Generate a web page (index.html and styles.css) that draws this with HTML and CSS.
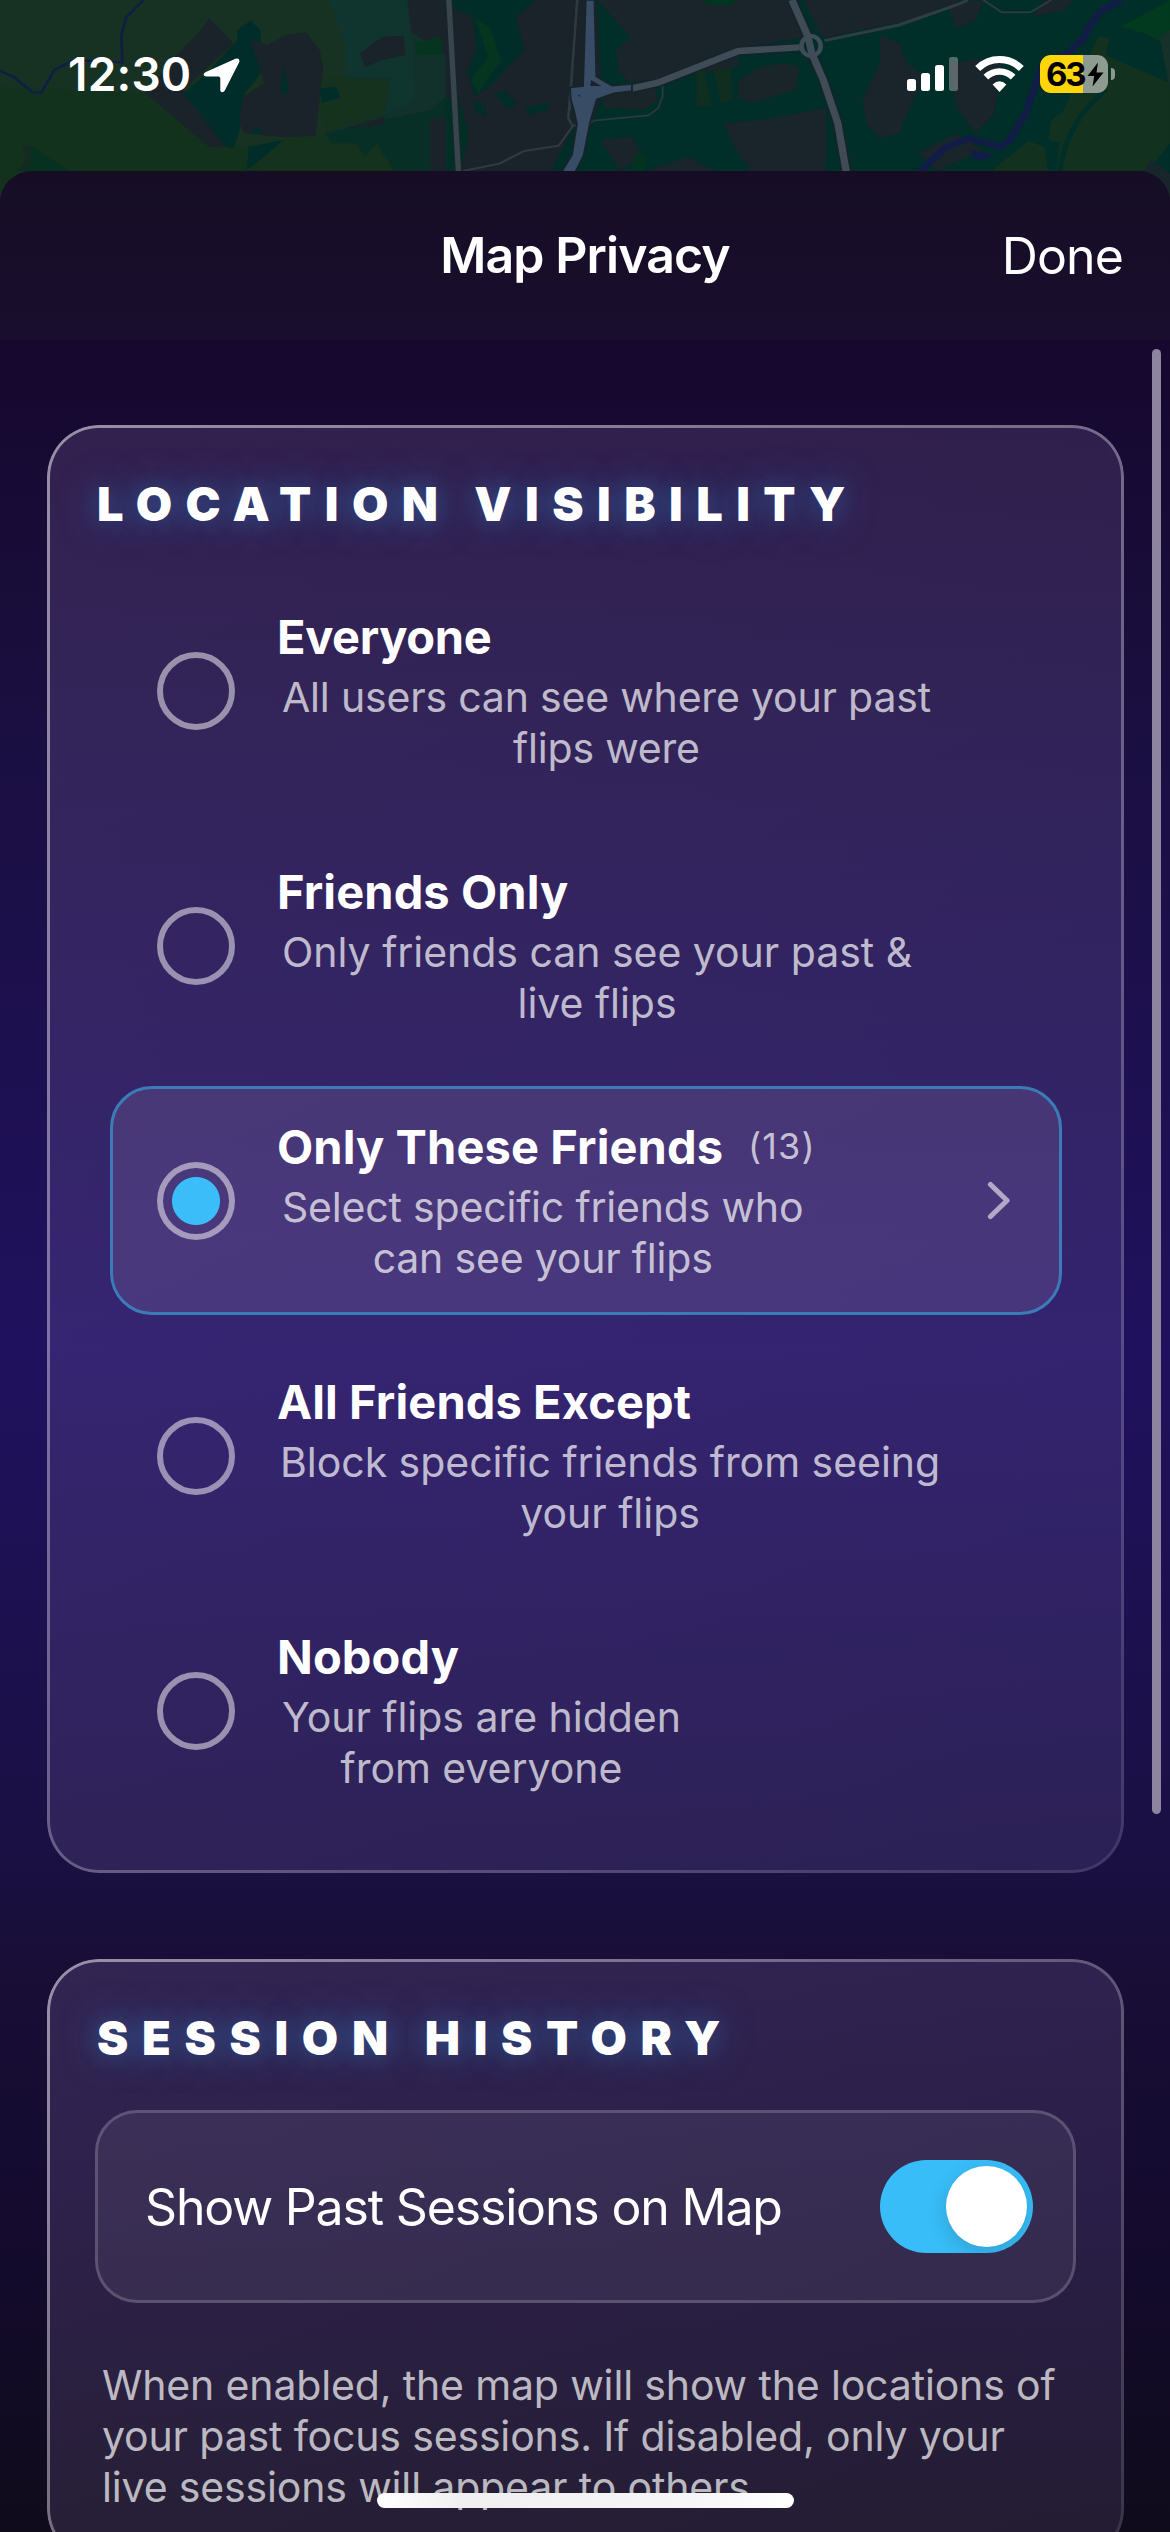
FILE: index.html
```
<!DOCTYPE html>
<html lang="en">
<head>
<meta charset="utf-8">
<title>Map Privacy</title>
<link rel="stylesheet" href="styles.css">
</head>
<body>
<div class="screen">
  <svg class="map" viewBox="0 0 1170 220" width="1170" height="220" aria-hidden="true">
    <rect width="1170" height="220" fill="#12312a"/>
    <g transform="scale(.38265 .33333)">
      <path d="M0 0H860L905 140V240H1020L1000 340L850 400L860 440L1030 513V660H0Z" fill="#173222"/>
      <path d="M0 260L380 280L560 440L640 440L850 400L1000 440L1030 513V660H0Z" fill="#12321e"/>
      <path d="M835 310V230L1020 240L1005 345L960 360L850 395ZM650 440L830 400L980 430L1030 513H690Z" fill="#15321f"/>
      <path d="M860 0H1060L1080 140L1085 300L1005 345L1020 235H903V140Z" fill="#10352f"/>
      <path d="M547 55L610 130L480 270L600 400V440H545L380 280L450 180L520 95Z" fill="#1a2329"/>
      <path d="M655 62L680 90L690 210L640 280L625 400L610 445L590 440L480 280L540 220L620 120V90Z" fill="#002d29"/>
      <path d="M655 120L700 135L745 105L800 97L835 150L845 200L835 300L825 408L740 412L640 400L625 370L635 290L690 250Z" fill="#1a2329"/>
      <path d="M743 195L756 280H732ZM835 265L880 260L888 295L840 308ZM672 378L692 402H650ZM650 440L740 420L690 470L645 510Z" fill="#002d29"/>
      <path d="M80 437L180 513H40L80 490Z" fill="#06301f"/>
      <path d="M60 437H80V490L50 513L65 480Z" fill="#152a22"/>
      <path d="M850 400L1000 360L1125 330L1165 290V513H1030L985 430L955 470L930 430H865Z" fill="#072f25"/>
      <path d="M940 160L1000 110L1055 107L1060 165L1000 180L955 200ZM900 385L1005 350L1000 375Z" fill="#1a2329"/>
      <path d="M1065 0H1570V513H1125V360L1165 350V165L1075 95Z" fill="#1a2329"/>
      <path d="M1180 0H1400L1350 50L1370 150L1290 250L1240 290L1220 210L1245 150L1235 50L1190 30Z" fill="#002d28"/>
      <path d="M1245 60L1280 80L1310 180L1250 280L1230 240L1275 170Z" fill="#06351f"/>
      <path d="M1085 130L1155 110V165H1090Z" fill="#06351f"/>
      <path d="M1240 305L1265 310L1270 350L1240 335ZM1290 280L1320 272L1350 310L1330 330ZM1370 325L1430 305L1435 330L1385 345Z" fill="#002d28"/>
      <path d="M1200 300L1225 400L1205 513H1165V290Z" fill="#002f26"/>
      <path d="M1500 380L1440 513H1570V380Z" fill="#002d28"/>
      <path d="M375 0L330 52L317 105L320 187L195 180L142 210L108 278L85 277L35 230L0 212" fill="none" stroke="#101d45" stroke-width="7"/>
      <path d="M1173 0L1198 516" stroke="#17262a" stroke-width="20"/>
      <path d="M1173 0L1198 516" stroke="#38454c" stroke-width="14"/>
      <path d="M1509 0L1485 355L1497 378L1460 437L1370 453L1305 491L1210 513M1497 378L1570 360" fill="none" stroke="#303b40" stroke-width="6"/>
    </g>
    <g transform="translate(570 0) scale(.38265 .33333)">
      <path d="M80 0H1568V660H0V513L30 460L80 300Z" fill="#002e28"/>
      <path d="M70 0H580L620 110L440 145L230 235L150 250L90 80ZM125 100L440 100V200L230 240L125 220Z" fill="#1a242b"/>
      <path d="M70 0L160 110L120 150V225L80 210Z" fill="#002e28"/>
      <path d="M340 0H430V15H370Z" fill="#00351f"/>
      <path d="M620 0H1020L890 60L660 115L610 0ZM985 10L1080 0L1060 60L1010 85ZM1210 50L1290 30L1320 0H1240Z" fill="#1a242b"/>
      <path d="M810 105L860 130L880 190L930 230L900 290L860 400L810 415L775 370L765 300L810 190ZM990 190L1130 170L1110 340L1060 400L1010 320ZM500 360L670 325L668 513H470L430 440L400 370ZM80 420L160 410L190 470L130 513ZM200 513L310 470L380 513ZM910 460L1010 400L1080 450L960 513Z" fill="#1a242b"/>
      <path d="M500 200L550 190L600 200L590 270L470 310L440 290L440 240ZM80 270L220 260L230 300L190 330L90 320Z" fill="#1a252a"/>
      <path d="M330 215L350 210L370 315L330 320ZM375 210L420 205L425 300L395 310Z" fill="#102e20"/>
      <path d="M170 460L200 470L195 513H160Z" fill="#053220"/>
      <path d="M1380 110L1410 112L1400 165L1568 250V430L1510 513H1100L1180 440L1290 330Z" fill="#12311f"/>
      <path d="M1440 80L1568 0V140L1500 100Z" fill="#023a20"/>
      <path d="M1540 110L1568 90V270Z" fill="#16302a"/>
      <path d="M1225 300L1260 340L1250 420L1280 430L1270 513H1250L1240 440L1190 420Z" fill="#002e28"/>
      <path d="M1400 270Q1300 360 1280 513" fill="none" stroke="#002e28" stroke-width="14"/>
      <path d="M1500 513L1520 480L1568 520V660Z" fill="#18252a"/>
      <path d="M1440 0L1385 35L1360 75L1340 120L1300 160L1240 185L1215 260L1190 340L1150 420L1125 440L1040 415L985 440L915 513" fill="none" stroke="#111d46" stroke-width="19"/>
      <path d="M1050 450L1110 465L1080 480L1050 475Z" fill="#111d46"/>
      <path d="M1080 0L1128 37H1203L1258 0" fill="none" stroke="#2c393e" stroke-width="6"/>
      <path d="M60 362L205 346L230 325L242 290V260L225 232M18 0L0 330" fill="none" stroke="#2c393e" stroke-width="5"/>
      <path d="M665 122L860 75L1010 15L1040 0" fill="none" stroke="#303c42" stroke-width="9"/>
      <path d="M580 0L622 110M630 160L662 240L700 370L722 516M160 266L230 248L440 153L600 142" fill="none" stroke="#16242a" stroke-width="28" stroke-linejoin="round"/>
      <path d="M580 0L622 110L632 160L662 240L700 370L722 516M160 266L230 248L440 153L600 142" fill="none" stroke="#3f4c58" stroke-width="19" stroke-linejoin="round"/>
      <ellipse cx="630" cy="138" rx="25" ry="30" fill="none" stroke="#3f4c58" stroke-width="12"/>
      <path d="M41 0H64L69 230L110 257L162 252V273L115 280L70 298L52 370L36 465L14 516H-22L5 465L18 372L10 330L2 300L0 262L34 258Z" fill="#384c66" stroke="#16242c" stroke-width="5"/>
      <path d="M53 258L55 240L82 258Z" fill="#16242c"/>
      <circle cx="24" cy="287" r="2.500" fill="#16242c"/>
    </g>
  </svg>

  <header class="status">
    <div class="clock">12:30
      <svg width="37" height="35" viewBox="0 0 37 35"><path d="M2.300 14.200L32.500.700Q37-.700 36.300 4L21.800 32.500Q19.800 35.800 17.300 33V20.300Q17 18.800 15.500 18.600H3Q-1.400 17 2.300 14.200Z" fill="#fff"/></svg>
    </div>
    <div class="indicators">
      <svg class="signal" width="51" height="34" viewBox="0 0 51 34" fill="#fff">
        <rect y="22" width="9" height="12" rx="2.500"/><rect x="14" y="16" width="9" height="18" rx="2.500"/><rect x="28" y="8" width="9" height="26" rx="2.500"/><rect x="42" width="9" height="34" rx="2.500" opacity=".3"/>
      </svg>
      <svg class="wifi" width="49" height="36" viewBox="0 0 49 36">
        <path d="M2.700 12.500A31 31 0 0 1 46.300 12.500" fill="none" stroke="#fff" stroke-width="7"/>
        <path d="M10.900 21.100A19.200 19.200 0 0 1 38.100 21.100" fill="none" stroke="#fff" stroke-width="6.600"/>
        <path d="M24.500 36L17.600 28.500Q24.500 22 31.400 28.500Z" fill="#fff"/>
      </svg>
      <div class="battery">
        <span class="level">63</span>
        <svg width="17" height="25" viewBox="0 0 17 25"><path d="M11 .5L.5 14H7.200L5.500 24.500L16.500 10.500H9.500Z" fill="#000"/></svg>
      </div>
      <span class="nub"></span>
    </div>
  </header>

  <main class="sheet">
    <div class="navbar">
      <h1 class="nav-title">Map Privacy</h1>
      <span class="nav-done">Done</span>
    </div>
    <div class="content">
      <section class="card">
        <h2 class="card-title">LOCATION VISIBILITY</h2>
        <div class="options">
          <div class="option">
            <span class="radio"></span>
            <div class="option-text">
              <div class="option-name tight">Everyone</div>
              <p class="option-desc inset tight">All users can see where your past<br>flips were</p>
            </div>
          </div>
          <div class="option">
            <span class="radio"></span>
            <div class="option-text">
              <div class="option-name">Friends Only</div>
              <p class="option-desc inset">Only friends can see your past &amp;<br>live flips</p>
            </div>
          </div>
          <div class="option selected">
            <span class="radio"></span>
            <div class="option-text">
              <div class="option-name">Only These Friends <span class="count">(13)</span></div>
              <p class="option-desc inset tight">Select specific friends who<br>can see your flips</p>
            </div>
            <svg class="chevron" width="24" height="39" viewBox="0 0 24 39"><path d="M3.500 3.500L20 19.500L3.500 35.500" fill="none" stroke="#b3a8c7" stroke-width="5.200" stroke-linecap="round" stroke-linejoin="round"/></svg>
          </div>
          <div class="option">
            <span class="radio"></span>
            <div class="option-text">
              <div class="option-name">All Friends Except</div>
              <p class="option-desc">Block specific friends from seeing<br>your flips</p>
            </div>
          </div>
          <div class="option">
            <span class="radio"></span>
            <div class="option-text">
              <div class="option-name">Nobody</div>
              <p class="option-desc inset">Your flips are hidden<br>from everyone</p>
            </div>
          </div>
        </div>
      </section>

      <section class="card card-history">
        <h2 class="card-title wide">SESSION HISTORY</h2>
        <div class="setting">
          <span class="setting-label">Show Past Sessions on Map</span>
          <span class="switch"><span class="knob"></span></span>
        </div>
        <p class="note">When enabled, the map will show the locations of<br>your past focus sessions. If disabled, only your<br>live sessions will appear to others.</p>
      </section>
    </div>
  </main>
  <div class="scrollbar"></div>
  <div class="home-bar"></div>
</div>
</body>
</html>
```
FILE: styles.css
```
* { box-sizing: border-box; }
body { margin: 0; background: #000; }
h1, h2, p { margin: 0; }

.screen {
  position: relative;
  width: 1170px;
  height: 2532px;
  overflow: hidden;
  color: #fff;
  font-family: Inter, "Liberation Sans", sans-serif;
  white-space: nowrap;
}
.map { position: absolute; left: 0; top: 0; }

.status {
  position: relative;
  height: 171px;
  padding: 45px 55px 0 68px;
  display: flex;
  justify-content: space-between;
}
.clock {
  height: 58px;
  display: flex;
  align-items: center;
  gap: 12px;
  font-size: 46px;
  line-height: 58px;
  font-weight: 600;
  letter-spacing: .2px;
}
.clock svg { margin-top: 3px; }
.indicators { height: 58px; display: flex; align-items: center; }
.wifi { margin-left: 16.500px; }
.battery {
  width: 68px;
  height: 38px;
  margin-left: 16.500px;
  padding-left: 6px;
  border-radius: 11px;
  background: linear-gradient(90deg, #ffd60a 43px, #8d9b91 43px);
  display: flex;
  align-items: center;
}
.level {
  width: 41px;
  color: #000;
  font-size: 33px;
  line-height: 38px;
  font-weight: 700;
  letter-spacing: -2.200px;
}
.nub {
  width: 4.500px;
  height: 12px;
  margin-left: 2.500px;
  border-radius: 0 5px 5px 0;
  background: #8b9a90;
}

.sheet {
  position: relative;
  height: 2361px;
  border-radius: 32px 32px 0 0;
  overflow: hidden;
  background: linear-gradient(180deg, #16082a 0, #16082e 190px, #1a0f40 550px, #20115e 1180px, #1a1042 1690px, #180e36 1800px, #140b2f 2040px, #100b1b 2361px);
}
.navbar {
  height: 169px;
  padding: 0 47px;
  background: linear-gradient(180deg, #160d25, #190e2d);
  display: grid;
  grid-template-columns: 1fr auto 1fr;
  align-items: center;
}
.nav-title {
  grid-column: 2;
  margin-top: -2px;
  font-size: 50px;
  line-height: 60px;
  font-weight: 600;
  letter-spacing: -.91px;
}
.nav-done {
  justify-self: end;
  font-size: 50px;
  line-height: 60px;
  letter-spacing: -.87px;
}

.content {
  padding: 85px 46px 0 47px;
  display: flex;
  flex-direction: column;
  gap: 86px;
}
.card {
  position: relative;
  height: 1448px;
  flex: none;
  padding: 50px 48px 0;
  border-radius: 52px;
  background: linear-gradient(155deg, rgba(215, 175, 255, .14), rgba(200, 180, 255, .1));
}
.card::before {
  content: "";
  position: absolute;
  inset: 0;
  padding: 3px;
  border-radius: inherit;
  background: linear-gradient(135deg, rgba(255, 255, 255, .5), rgba(255, 255, 255, .1));
  -webkit-mask: linear-gradient(#000 0 0) content-box exclude, linear-gradient(#000 0 0);
  mask: linear-gradient(#000 0 0) content-box exclude, linear-gradient(#000 0 0);
}
.card-title {
  padding-left: 2px;
  font-size: 47px;
  line-height: 58px;
  font-weight: 900;
  letter-spacing: 13.460px;
  text-shadow: 0 0 36px rgba(56, 150, 230, .5), 0 0 22px rgba(50, 130, 210, .25);
}
.card-title.wide { letter-spacing: 13.680px; }

.options {
  margin: 43px 14px 0 15px;
  display: flex;
  flex-direction: column;
  gap: 26px;
}
.option {
  height: 229px;
  padding: 0 51px 0 47px;
  display: flex;
  align-items: center;
}
.selected {
  border: 3px solid #3b7cb8;
  padding: 0 48px 0 44px;
  border-radius: 42px;
  background: rgba(255, 230, 255, .1);
}
.radio {
  width: 78px;
  height: 78px;
  border: 6px solid rgba(255, 255, 255, .5);
  border-radius: 50%;
}
.selected .radio {
  background: radial-gradient(circle, #3abdf9 23.500px, rgba(58, 189, 249, 0) 24.500px);
}
.option-text {
  margin-left: 42px;
  display: flex;
  flex-direction: column;
  align-items: flex-start;
  gap: 7px;
}
.option-name {
  display: flex;
  align-items: center;
  font-size: 47px;
  line-height: 57px;
  font-weight: 700;
  letter-spacing: .1px;
}
.option-name.tight { letter-spacing: -.38px; }
.count {
  margin-left: 25px;
  font-size: 36px;
  line-height: 57px;
  font-weight: 400;
  letter-spacing: 1.100px;
  color: rgba(255, 255, 255, .7);
}
.option-desc {
  padding-left: 3px;
  font-size: 41px;
  line-height: 51px;
  letter-spacing: -.03px;
  text-align: center;
  color: rgba(255, 255, 255, .7);
}
.option-desc.inset { padding-left: 5px; }
.option-desc.tight { letter-spacing: -.19px; }
.chevron { margin-left: auto; }

.card-history { height: 602px; }
.setting {
  height: 193px;
  margin-top: 43px;
  padding: 0 40px 0 47px;
  border: 3px solid rgba(255, 255, 255, .18);
  border-radius: 42px;
  background: rgba(255, 255, 255, .06);
  display: flex;
  align-items: center;
  justify-content: space-between;
}
.setting-label {
  font-size: 50px;
  line-height: 60px;
  letter-spacing: -1.170px;
}
.switch {
  width: 153px;
  height: 93px;
  padding: 6px;
  border-radius: 47px;
  background: #38bdf8;
  display: flex;
  justify-content: flex-end;
  overflow: hidden;
}
.knob {
  width: 81px;
  height: 81px;
  border-radius: 50%;
  background: #fff;
  box-shadow: 0 6px 20px rgba(0, 0, 0, .15);
}
.note {
  margin-top: 57px;
  padding-left: 7px;
  font-size: 41px;
  line-height: 51px;
  letter-spacing: -.15px;
  color: rgba(255, 255, 255, .7);
}

.scrollbar {
  position: absolute;
  left: 1152px;
  top: 349px;
  width: 9px;
  height: 1465px;
  border-radius: 5px;
  background: #8d849f;
}
.home-bar {
  position: absolute;
  left: 377px;
  top: 2493px;
  width: 417px;
  height: 15px;
  border-radius: 8px;
  background: linear-gradient(90deg, #fff, #f0f0f0 20%, #f6f6f6 75%, #fff);
}
```
